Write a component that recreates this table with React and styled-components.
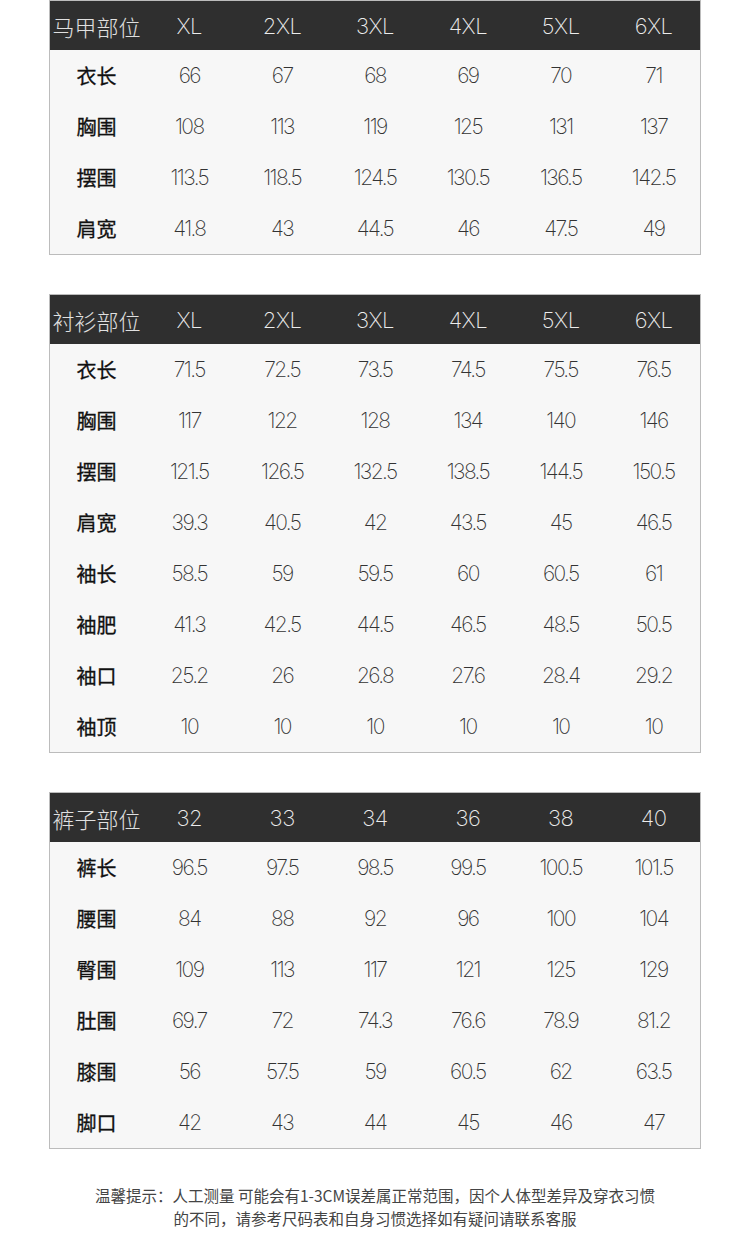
import React from "react";
import styled, { createGlobalStyle } from "styled-components";

const GlobalStyle = createGlobalStyle`
  body {
    margin: 0;
    background: #ffffff;
    font-family: "Lato", "Noto Sans CJK SC", sans-serif;
  }
`;

const tables = [
  {
    title: "马甲部位",
    sizes: ["XL", "2XL", "3XL", "4XL", "5XL", "6XL"],
    rows: [
      ["衣长", "66", "67", "68", "69", "70", "71"],
      ["胸围", "108", "113", "119", "125", "131", "137"],
      ["摆围", "113.5", "118.5", "124.5", "130.5", "136.5", "142.5"],
      ["肩宽", "41.8", "43", "44.5", "46", "47.5", "49"],
    ],
  },
  {
    title: "衬衫部位",
    sizes: ["XL", "2XL", "3XL", "4XL", "5XL", "6XL"],
    rows: [
      ["衣长", "71.5", "72.5", "73.5", "74.5", "75.5", "76.5"],
      ["胸围", "117", "122", "128", "134", "140", "146"],
      ["摆围", "121.5", "126.5", "132.5", "138.5", "144.5", "150.5"],
      ["肩宽", "39.3", "40.5", "42", "43.5", "45", "46.5"],
      ["袖长", "58.5", "59", "59.5", "60", "60.5", "61"],
      ["袖肥", "41.3", "42.5", "44.5", "46.5", "48.5", "50.5"],
      ["袖口", "25.2", "26", "26.8", "27.6", "28.4", "29.2"],
      ["袖顶", "10", "10", "10", "10", "10", "10"],
    ],
  },
  {
    title: "裤子部位",
    sizes: ["32", "33", "34", "36", "38", "40"],
    rows: [
      ["裤长", "96.5", "97.5", "98.5", "99.5", "100.5", "101.5"],
      ["腰围", "84", "88", "92", "96", "100", "104"],
      ["臀围", "109", "113", "117", "121", "125", "129"],
      ["肚围", "69.7", "72", "74.3", "76.6", "78.9", "81.2"],
      ["膝围", "56", "57.5", "59", "60.5", "62", "63.5"],
      ["脚口", "42", "43", "44", "45", "46", "47"],
    ],
  },
];

const SizeChart = () => {
  return (
    <Page>
      <GlobalStyle />
      {tables.map((t, i) => (
        <Table key={i}>
          <HeadRow>
            <HeadTitle>{t.title}</HeadTitle>
            {t.sizes.map((s) => (
              <HeadCell key={s}>{s}</HeadCell>
            ))}
          </HeadRow>
          {t.rows.map((row, r) => (
            <Row key={r}>
              {row.map((cell, c) =>
                c === 0 ? (
                  <Label key={c}>{cell}</Label>
                ) : (
                  <Cell key={c}>{cell}</Cell>
                )
              )}
            </Row>
          ))}
        </Table>
      ))}
      <Note>
        温馨提示：人工测量 可能会有1-3CM误差属正常范围，因个人体型差异及穿衣习惯
        <br />
        的不同，请参考尺码表和自身习惯选择如有疑问请联系客服
      </Note>
    </Page>
  );
};

export default SizeChart;

const Page = styled.div`
  width: 652px;
  margin: 0 auto;
  padding-bottom: 30px;
`;

const Table = styled.div`
  border: 1px solid #bcbcbc;
  background: #f7f7f7;
  & + & {
    margin-top: 39px;
  }
`;

const HeadRow = styled.div`
  display: grid;
  grid-template-columns: repeat(7, 1fr);
  height: 49px;
  background: #2f2f2f;
  align-items: center;
`;

const HeadCell = styled.div`
  text-align: center;
  color: #ececec;
  font-family: "Inter", "Lato", sans-serif;
  font-weight: 200;
  font-size: 22px;
  letter-spacing: -0.5px;
`;

const HeadTitle = styled.div`
  text-align: center;
  color: #e0e0e0;
  font-family: "Noto Sans CJK SC", sans-serif;
  font-weight: 300;
  font-size: 22px;
  white-space: nowrap;
`;

const Row = styled.div`
  display: grid;
  grid-template-columns: repeat(7, 1fr);
  height: 51px;
  align-items: center;
`;

const Label = styled.div`
  text-align: center;
  color: #111;
  font-family: "Noto Sans CJK SC", sans-serif;
  font-weight: 400;
  font-size: 20px;
  -webkit-text-stroke: 0.3px #111;
`;

const Cell = styled.div`
  text-align: center;
  color: #333;
  font-family: "Inter", "Lato", sans-serif;
  font-weight: 200;
  font-size: 21px;
  letter-spacing: -1.6px;
`;

const Note = styled.p`
  margin: 35px 0 0;
  text-align: center;
  color: #444;
  font-family: "Noto Sans CJK SC", sans-serif;
  font-size: 15.5px;
  line-height: 23px;
`;
